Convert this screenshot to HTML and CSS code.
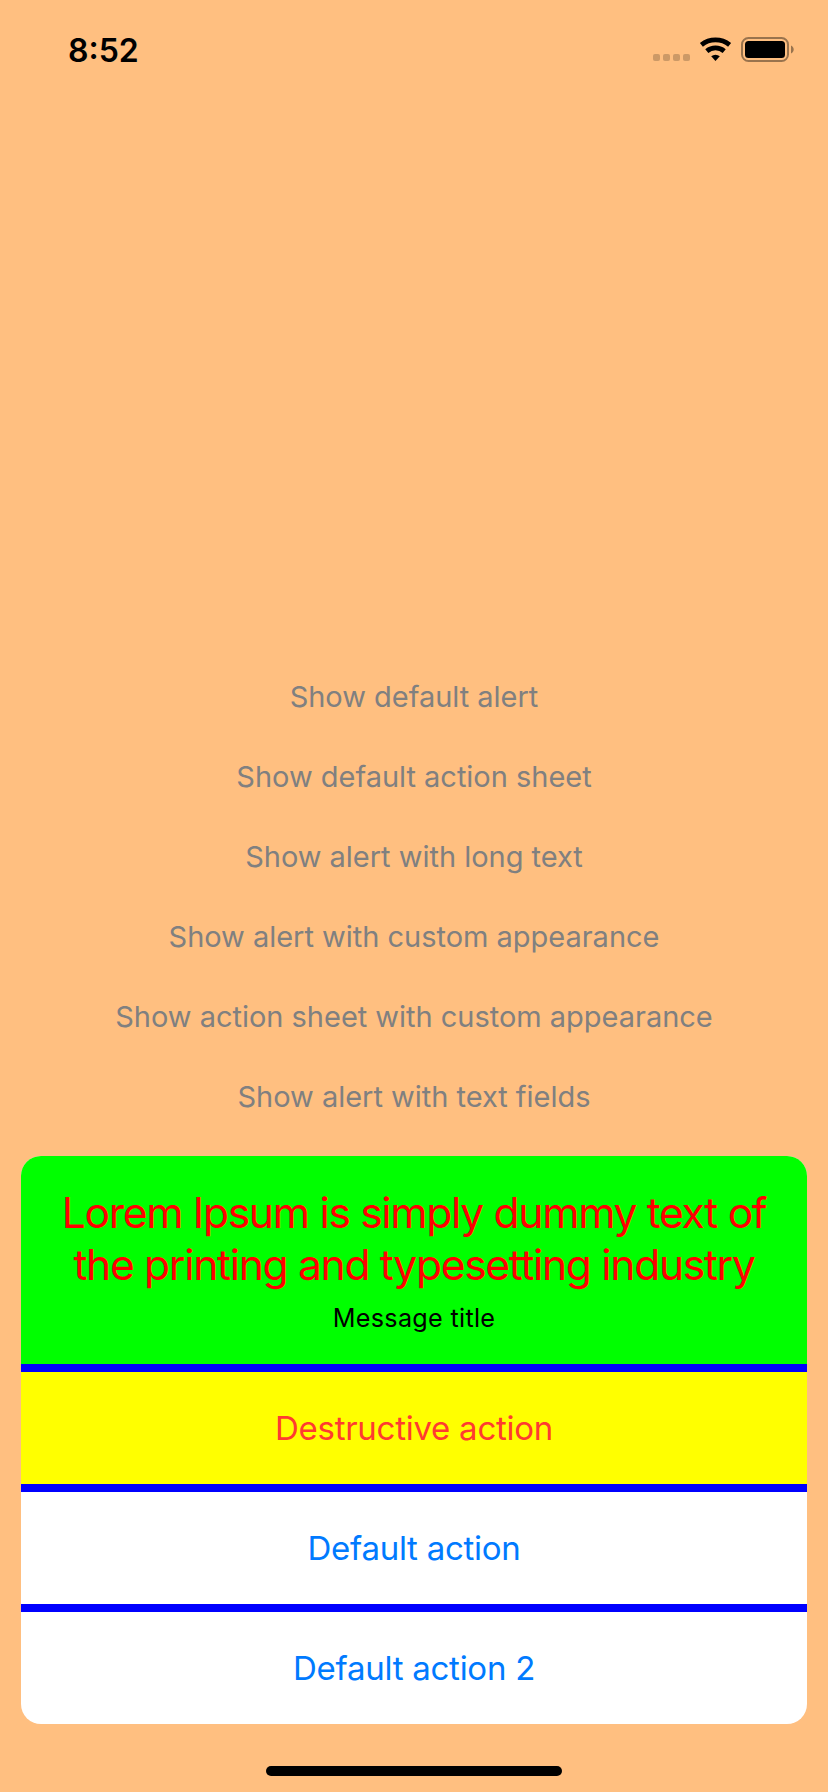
FILE: index.html
```
<!DOCTYPE html>
<html lang="en">
<head>
<meta charset="utf-8">
<title>Alerts</title>
<link rel="stylesheet" href="styles.css">
</head>
<body>
<div class="screen">
  <header class="status-bar">
    <span class="time">8:52</span>
    <svg class="status-icons" width="144" height="28" viewBox="0 0 144 28">
      <g fill="#cc9966">
        <rect x="1" y="17" width="7" height="7" rx="2"/>
        <rect x="11" y="17" width="7" height="7" rx="2"/>
        <rect x="21" y="17" width="7" height="7" rx="2"/>
        <rect x="31" y="17" width="7" height="7" rx="2"/>
      </g>
      <g fill="none" stroke="#000" stroke-width="4.8">
        <path d="M49.4 7.9a22.5 22.5 0 0 1 28.2 0"/>
        <path d="M54.8 14.1a13.5 13.5 0 0 1 17.4 0"/>
      </g>
      <path d="M59.2 19.3a6.5 6.5 0 0 1 8.6 0L63.5 24z"/>
      <rect x="90" y="1" width="46" height="23" rx="6.5" fill="none" stroke="#99734d" stroke-width="2"/>
      <rect x="93" y="4" width="40" height="17" rx="3.5"/>
      <path d="M139 8.5c3.6 1.4 3.6 6.6 0 8z" fill="#99734d"/>
    </svg>
  </header>
  <main class="menu">
    <span>Show default alert</span>
    <span>Show default action sheet</span>
    <span>Show alert with long text</span>
    <span>Show alert with custom appearance</span>
    <span>Show action sheet with custom appearance</span>
    <span>Show alert with text fields</span>
  </main>
  <section class="sheet">
    <div class="sheet-header">
      <h1 class="sheet-title">Lorem Ipsum is simply dummy text of<br>the printing and typesetting industry</h1>
      <p class="sheet-message">Message title</p>
    </div>
    <div class="action destructive">Destructive action</div>
    <div class="action">Default action</div>
    <div class="action">Default action 2</div>
  </section>
  <div class="home-indicator"></div>
</div>
</body>
</html>
```
FILE: styles.css
```
* { box-sizing: border-box; }
body {
  margin: 0;
  background: #ffbf80;
  font-family: Inter, "Liberation Sans", sans-serif;
}
.screen {
  display: flex;
  flex-direction: column;
  align-items: center;
  width: 828px;
  height: 1792px;
}
.status-bar {
  display: flex;
  justify-content: space-between;
  width: 100%;
  height: 657px;
  padding: 37px 32px 0 68px;
}
.time {
  font-size: 32px;
  font-weight: 600;
  line-height: 28px;
}
.status-icons { display: block; }
.menu {
  display: flex;
  flex-direction: column;
  align-items: center;
  height: 499px;
  color: #808080;
  font-size: 29px;
  letter-spacing: -0.02px;
  line-height: 80px;
}
.sheet {
  width: 786px;
  height: 568px;
  flex: none;
  overflow: hidden;
  border-radius: 20px;
  background: #fff;
  text-align: center;
}
.sheet-header {
  height: 208px;
  padding-top: 31px;
  background: #0f0;
}
.sheet-title {
  margin: 0 0 11px;
  color: #f00;
  font-size: 42.6px;
  font-weight: 400;
  letter-spacing: -1.32px;
  line-height: 52px;
  white-space: nowrap;
}
.sheet-message {
  margin: 0;
  font-size: 25.2px;
  letter-spacing: 0.3px;
  line-height: 32px;
}
.action {
  border-top: 8px solid #00f;
  color: #007aff;
  font-size: 33px;
  letter-spacing: -0.26px;
  line-height: 112px;
}
.destructive {
  background: #ff0;
  color: #ff3b30;
}
.home-indicator {
  width: 296px;
  height: 10px;
  margin-top: 42px;
  border-radius: 5px;
  background: #000;
}
```
